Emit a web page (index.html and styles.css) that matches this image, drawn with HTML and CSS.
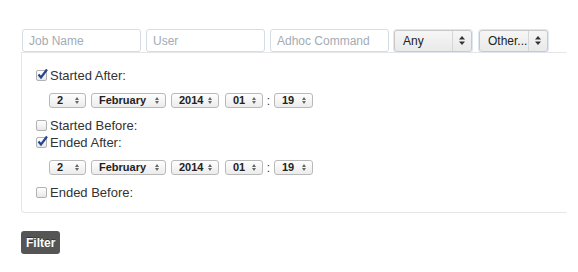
FILE: index.html
```html
<!DOCTYPE html>
<html lang="en">

<head>
    <meta charset="UTF-8">
    <title>Job filter</title>
    <link rel="stylesheet" href="styles.css">
</head>

<body>
    <div class="page">
        <div class="search_row">
            <input type="text" class="text_field" placeholder="Job Name">
            <input type="text" class="text_field" placeholder="User">
            <input type="text" class="text_field" placeholder="Adhoc Command">
            <div class="big_select any">
                <span>Any</span>
                <span class="big_arrow"><svg width="6" height="9" viewBox="0 0 6 9"><path d="M3 0 L6 3.5 H0 Z M3 9 L6 5.5 H0 Z" fill="#333"/></svg></span>
            </div>
            <div class="big_select other">
                <span>Other...</span>
                <span class="big_arrow"><svg width="6" height="9" viewBox="0 0 6 9"><path d="M3 0 L6 3.5 H0 Z M3 9 L6 5.5 H0 Z" fill="#333"/></svg></span>
            </div>
        </div>

        <div class="panel">
            <label class="check"><span class="box"><svg width="13" height="13" viewBox="0 0 13 13"><path d="M2.5 6.5 L5 9.5 L11 1.5" fill="none" stroke="#27448f" stroke-width="2.2"/></svg></span>Started After:</label>
            <div class="date_row">
                <span class="small_select w_day">2</span>
                <span class="small_select w_month">February</span>
                <span class="small_select w_year">2014</span>
                <span class="small_select w_hour">01</span>
                <span class="colon">:</span>
                <span class="small_select w_min">19</span>
            </div>
            <label class="check"><span class="box"></span>Started Before:</label>
            <label class="check"><span class="box"><svg width="13" height="13" viewBox="0 0 13 13"><path d="M2.5 6.5 L5 9.5 L11 1.5" fill="none" stroke="#27448f" stroke-width="2.2"/></svg></span>Ended After:</label>
            <div class="date_row">
                <span class="small_select w_day">2</span>
                <span class="small_select w_month">February</span>
                <span class="small_select w_year">2014</span>
                <span class="small_select w_hour">01</span>
                <span class="colon">:</span>
                <span class="small_select w_min">19</span>
            </div>
            <label class="check"><span class="box"></span>Ended Before:</label>
        </div>

        <button type="button" class="filter_btn">Filter</button>
    </div>
</body>

</html>
```

FILE: styles.css
```css
body {
    margin: 0;
    font-family: "Liberation Sans", Arial, sans-serif;
    color: #333;
    background-color: #fff;
}

.page {
    padding: 29px 0 0 21px;
}

.search_row {
    display: flex;
    align-items: center;
    height: 23px;
    padding-left: 1px;
}

.text_field {
    box-sizing: border-box;
    width: 119px;
    height: 23px;
    margin: 0 5px 0 0;
    padding: 0 6px;
    border: 1px solid #d3dce7;
    border-radius: 3px;
    font-family: inherit;
    font-size: 12px;
    color: #555;
}

.text_field::placeholder {
    color: #a3abb4;
}

.big_select {
    position: relative;
    box-sizing: border-box;
    display: flex;
    align-items: center;
    height: 22px;
    padding-left: 8px;
    border: 1px solid #c9c9c9;
    border-radius: 3px;
    background: linear-gradient(#f6f6f6, #e9e9e9);
    box-shadow: 0 0 0 1px #dde6f1;
    font-size: 12px;
    color: #222;
}

.big_select.any {
    width: 78px;
}

.big_select.other {
    width: 69px;
    margin-left: 7px;
}

.big_arrow {
    position: absolute;
    right: 0;
    top: 0;
    bottom: 0;
    width: 18px;
    display: flex;
    align-items: center;
    justify-content: center;
    border-left: 1px solid #d6d6d6;
}

.panel {
    box-sizing: border-box;
    width: 546px;
    padding: 14px 0 11px 13px;
    border: 1px solid #e6e6e6;
    border-right-color: transparent;
    border-radius: 0 0 0 4px;
}

.check {
    display: flex;
    align-items: center;
    height: 17px;
    font-size: 13px;
    color: #333;
}

.box {
    position: relative;
    box-sizing: border-box;
    width: 11px;
    height: 11px;
    margin: 0 3px 0 1px;
    border: 1px solid #b2b2b2;
    border-radius: 2px;
    background: linear-gradient(#fff, #e8e8e8);
}

.box svg {
    position: absolute;
    left: -1px;
    top: -3px;
}

.date_row {
    display: flex;
    align-items: center;
    height: 16px;
    margin: 8.5px 0 8.5px 14px;
}

.small_select {
    position: relative;
    box-sizing: border-box;
    height: 15px;
    margin-right: 5px;
    padding-left: 7px;
    border: 1px solid #b9b9b9;
    border-radius: 3px;
    background: linear-gradient(#fefefe, #ececec);
    font-size: 11px;
    font-weight: bold;
    line-height: 13px;
    color: #222;
}

/* petites flèches haut / bas */
.small_select::before,
.small_select::after {
    content: "";
    position: absolute;
    right: 6px;
    border-left: 2.5px solid transparent;
    border-right: 2.5px solid transparent;
}

.small_select::before {
    top: 3px;
    border-bottom: 3px solid #666;
}

.small_select::after {
    top: 7px;
    border-top: 3px solid #666;
}

.w_day { width: 37px; }
.w_month { width: 75px; }
.w_year { width: 48px; margin-right: 6px; }
.w_hour { width: 38px; margin-right: 0; }
.w_min { width: 39px; }

.colon {
    width: 11px;
    text-align: center;
    font-size: 12px;
}

.filter_btn {
    display: block;
    height: 23px;
    margin-top: 18px;
    padding: 0 5px;
    border: none;
    border-radius: 3px;
    background-color: #555;
    color: #fff;
    font-family: inherit;
    font-size: 12px;
    font-weight: bold;
    text-shadow: 0 -1px 0 #333;
}
```
